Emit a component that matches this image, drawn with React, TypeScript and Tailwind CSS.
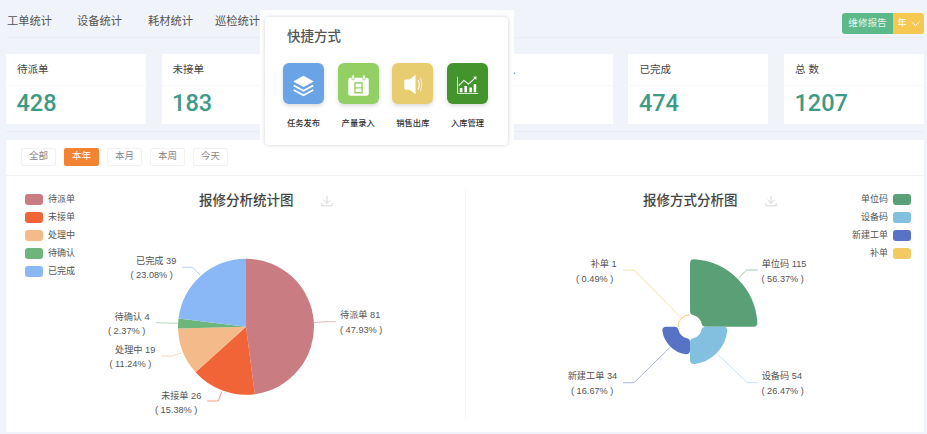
import React from "react";

const cards = [
  ["待派单", "428"],
  ["未接单", "183"],
  ["处理中", "110"],
  ["待确认", "12"],
  ["已完成", "474"],
  ["总 数", "1207"],
];

const tabs = ["全部", "本年", "本月", "本周", "今天"];

const pieData: [number, string][] = [
  [47.93, "#c97c82"],
  [15.38, "#f06438"],
  [11.24, "#f5ba8a"],
  [2.37, "#6eb57b"],
  [23.08, "#8ab8f6"],
];

function piePaths(cx: number, cy: number, r: number) {
  let acc = 0;
  return pieData.map(([v, color]) => {
    const a0 = (acc / 100) * Math.PI * 2;
    acc += v;
    const a1 = (acc / 100) * Math.PI * 2;
    const large = a1 - a0 > Math.PI ? 1 : 0;
    const d = `M${cx} ${cy}L${cx + r * Math.sin(a0)} ${cy - r * Math.cos(a0)}A${r} ${r} 0 ${large} 1 ${cx + r * Math.sin(a1)} ${cy - r * Math.cos(a1)}Z`;
    return <path key={color} d={d} fill={color} />;
  });
}

const AXES: [number, number][] = [
  [0, -1],
  [1, 0],
  [0, 1],
  [-1, 0],
];

function roseSector(cx: number, cy: number, q: number, ri: number, ro: number, c: number) {
  const a = AXES[q];
  const b = AXES[(q + 1) % 4];
  const pt = (R: number, nearB: boolean) => {
    const far = Math.sqrt(R * R - c * c);
    const u = nearB ? c : far;
    const v = nearB ? far : c;
    return `${cx + a[0] * u + b[0] * v} ${cy + a[1] * u + b[1] * v}`;
  };
  const Ro = ro - c;
  const Ri = ri + c;
  return `M${pt(Ro, false)}A${Ro} ${Ro} 0 0 1 ${pt(Ro, true)}L${pt(Ri, true)}A${Ri} ${Ri} 0 0 0 ${pt(Ri, false)}Z`;
}

function Sector({ q, ri, ro, color }: { q: number; ri: number; ro: number; color: string }) {
  return (
    <path
      d={roseSector(690, 326.7, q, ri, ro, 4)}
      fill={color}
      stroke={color}
      strokeWidth={8}
      strokeLinejoin="round"
    />
  );
}

function Label({ x, y, children }: { x: number; y: number; children: React.ReactNode }) {
  return (
    <text x={x} y={y} className="fill-[#555] text-[9.2px]">
      {children}
    </text>
  );
}

function DownloadIcon() {
  return (
    <svg width="12" height="12" viewBox="0 0 14 14" fill="none" stroke="#cfcfcf" strokeWidth="1">
      <path d="M7 1V9.5M2.8 5.6L7 9.8L11.2 5.6M1 9.5V12.6H13V9.5" />
    </svg>
  );
}

function Swatch({ color }: { color: string }) {
  return <span className="h-[11px] w-[18px] rounded-[3px]" style={{ backgroundColor: color }} />;
}

const shortcuts = [
  {
    label: "任务发布",
    bg: "bg-[#6ba4e6]",
    icon: (
      <svg width="41" height="41" viewBox="0 0 40 40">
        <path d="M20 12.5L30 18L20 23.5L10 18Z" fill="#fff" />
        <path d="M10.5 22L20 27.2L29.5 22M10.5 26.3L20 31.4L29.5 26.3" fill="none" stroke="#fff" strokeWidth="1.7" />
      </svg>
    ),
  },
  {
    label: "产量录入",
    bg: "bg-[#92d063]",
    icon: (
      <svg width="41" height="41" viewBox="0 0 40 40">
        <rect x="10" y="14.5" width="20" height="17.5" rx="2" fill="#fff" />
        <rect x="13.5" y="11.5" width="2.4" height="5" rx="1.2" fill="#fff" stroke="#92d063" strokeWidth="0.8" />
        <rect x="24.1" y="11.5" width="2.4" height="5" rx="1.2" fill="#fff" stroke="#92d063" strokeWidth="0.8" />
        <path d="M16.5 19.5H23.5V29H16.5ZM16.5 24.2H23.5" fill="none" stroke="#92d063" strokeWidth="1.3" />
      </svg>
    ),
  },
  {
    label: "销售出库",
    bg: "bg-[#e8cc70]",
    icon: (
      <svg width="41" height="41" viewBox="0 0 40 40">
        <path d="M12 17.5Q12 16 13.5 16H17L23 11.5V30.5L17 26H13.5Q12 26 12 24.5Z" fill="#fff" />
        <path d="M25.5 16.5Q27.5 21 25.5 25.5" fill="none" stroke="#fff" strokeWidth="1.2" />
        <path d="M27.8 14.5Q30.6 21 27.8 27.5" fill="none" stroke="#fff" strokeWidth="0.7" />
      </svg>
    ),
  },
  {
    label: "入库管理",
    bg: "bg-[#43942c]",
    icon: (
      <svg width="41" height="41" viewBox="0 0 40 40">
        <path d="M10.3 13.5V29.7H30.5" fill="none" stroke="#fff" strokeWidth="0.8" />
        <path d="M12.5 24.5H15V28.5H12.5ZM17 22.5H19.5V28.5H17ZM21.8 24H24.3V28.5H21.8ZM26 20.5H28.5V28.5H26Z" fill="#fff" />
        <path d="M11.5 22L16.5 17L21 20.5L28 14" fill="none" stroke="#fff" strokeWidth="1" />
        <path d="M25.5 13.5L28.8 13.2L28.5 16.5Z" fill="#fff" />
      </svg>
    ),
  },
];

export default function App() {
  return (
    <div className="relative flex h-[434px] w-[927px] flex-col overflow-hidden bg-[#f0f3f9] [font-family:'Liberation_Sans','Noto_Sans_CJK_SC',sans-serif]">
      {/* top navigation */}
      <div className="ml-[6px] mr-[3px] flex h-[38px] items-start justify-between border-b border-[#e9edf3] pl-px pt-[13px]">
        <div className="flex gap-[25px] text-[11.25px] leading-4 text-[#555]">
          <span>工单统计</span>
          <span>设备统计</span>
          <span className="ml-px">耗材统计</span>
          <span className="-ml-[3px]">巡检统计</span>
        </div>
        <div className="flex h-[21px] overflow-hidden rounded-[3px] text-white">
          <span className="flex w-[51px] items-center justify-center bg-[#5bb98a] text-[9.6px] text-[#e4f5ea]">维修报告</span>
          <span className="flex w-[31px] items-center justify-center gap-[4px] bg-[#f5c851] text-[9px]">
            年
            <svg width="9" height="6" viewBox="0 0 9 6" fill="none" stroke="#fff" strokeWidth="1">
              <path d="M0.7 1L4.5 4.6L8.3 1" />
            </svg>
          </span>
        </div>
      </div>

      {/* stat cards */}
      <div className="ml-[6px] mr-[3px] mt-4 grid grid-cols-6 gap-[15.6px]">
        {cards.map(([label, value]) => (
          <div key={label} className="flex h-[70px] flex-col bg-white">
            <div className="flex h-[32px] items-center border-b border-[#f7f8fa] pl-[11px] text-[10.5px] text-[#444]">{label}</div>
            <div className="flex flex-1 items-center pb-[3px] pl-[10.5px] text-[23.5px] font-medium text-[#3d9a85] [font-family:Roboto,sans-serif]">{value}</div>
          </div>
        ))}
      </div>

      <div className="ml-[6px] mr-[3px] mt-[7px] h-px bg-[#e9edf3]" />

      {/* analysis panel */}
      <div className="ml-[6px] mr-[3px] mt-2 flex h-[292px] flex-col bg-white">
        <div className="flex h-[36px] items-center gap-2 border-b border-[#f1f3f6] pb-[2px] pl-[15px]">
          {tabs.map((t) => (
            <span
              key={t}
              className={
                t === "本年"
                  ? "flex h-[18px] w-[35px] items-center justify-center rounded-[2px] bg-[#f28333] text-[9.5px] text-white"
                  : "flex h-[18px] w-[35px] items-center justify-center rounded-[2px] border border-[#f2f2f2] text-[9.5px] text-[#888]"
              }
            >
              {t}
            </span>
          ))}
        </div>

        <div className="flex flex-1">
          {/* left chart */}
          <div className="flex w-[459px]">
            <div className="flex w-[79px] flex-col gap-[7px] pl-[19px] pt-[18px]">
              {[
                ["待派单", "#c97c82"],
                ["未接单", "#f06438"],
                ["处理中", "#f5ba8a"],
                ["待确认", "#6eb57b"],
                ["已完成", "#8ab8f6"],
              ].map(([l, c]) => (
                <div key={l} className="flex h-[11px] items-center gap-[5px] text-[9px] text-[#555]">
                  <Swatch color={c} />
                  <span>{l}</span>
                </div>
              ))}
            </div>
            <div className="flex w-[380px] flex-col">
              <div className="ml-[114px] mt-[15px] flex h-5 items-center gap-[27px] text-[13.5px] font-medium text-[#444]">
                <span>报修分析统计图</span>
                <DownloadIcon />
              </div>
              <svg width="380" height="221" viewBox="85 211 380 221">
                {piePaths(246, 326.7, 68)}
                <g fill="none" strokeWidth="0.8">
                  <path d="M200 275L192.7 267.3H182.3" stroke="#a9cbf8" />
                  <path d="M178.3 323.3L155.7 322.7" stroke="#a5d0ae" />
                  <path d="M181.7 352.7L171.7 356H161" stroke="#f7cda9" />
                  <path d="M221.7 391.7L218.3 401H207.3" stroke="#f2815c" />
                  <path d="M314 322.7L325 321.7H336" stroke="#dba7ab" />
                </g>
                <Label x={136} y={264}>已完成 39</Label>
                <Label x={130.5} y={278.3}>( 23.08% )</Label>
                <Label x={114.5} y={319.5}>待确认 4</Label>
                <Label x={108} y={334}>( 2.37% )</Label>
                <Label x={115} y={353}>处理中 19</Label>
                <Label x={109.5} y={367}>( 11.24% )</Label>
                <Label x={161} y={398.5}>未接单 26</Label>
                <Label x={155} y={412.8}>( 15.38% )</Label>
                <Label x={340} y={318}>待派单 81</Label>
                <Label x={340} y={332.5}>( 47.93% )</Label>
              </svg>
            </div>
          </div>

          <div className="my-[14px] w-px bg-[#f3f4f6]" />

          {/* right chart */}
          <div className="flex flex-1">
            <div className="flex w-[372px] flex-col">
              <div className="ml-[177px] mt-[15px] flex h-5 items-center gap-[27px] text-[13.5px] font-medium text-[#444]">
                <span>报修方式分析图</span>
                <DownloadIcon />
              </div>
              <svg width="372" height="221" viewBox="466 211 372 221">
                <Sector q={0} ri={12} ro={67.5} color="#5aa077" />
                <Sector q={1} ri={12} ro={37.5} color="#83bfdf" />
                <Sector q={2} ri={12} ro={28} color="#5873c5" />
                <path d="M678 326.7A12 12 0 0 1 690 314.7" fill="none" stroke="#f2c963" strokeWidth="0.9" />
                <g fill="none" strokeWidth="0.8">
                  <path d="M738.3 278.3L746.7 270H757.7" stroke="#85b99b" />
                  <path d="M716.7 353.3L747.3 382.7H757.7" stroke="#b4daee" />
                  <path d="M670 347.3L634 382.7H623.3" stroke="#95a6db" />
                  <path d="M681.7 318.3L634 270H623.3" stroke="#f5dc93" />
                </g>
                <Label x={761.7} y={267.3}>单位码 115</Label>
                <Label x={761.5} y={281.6}>( 56.37% )</Label>
                <Label x={761.7} y={379.3}>设备码 54</Label>
                <Label x={761.5} y={393.6}>( 26.47% )</Label>
                <Label x={567.7} y={379.3}>新建工单 34</Label>
                <Label x={571} y={393.6}>( 16.67% )</Label>
                <Label x={590.7} y={267.3}>补单 1</Label>
                <Label x={576} y={281.6}>( 0.49% )</Label>
              </svg>
            </div>
            <div className="flex flex-1 flex-col items-end gap-[7px] pr-[13px] pt-[18px]">
              {[
                ["单位码", "#5aa077"],
                ["设备码", "#83bfdf"],
                ["新建工单", "#5873c5"],
                ["补单", "#f2c963"],
              ].map(([l, c]) => (
                <div key={l} className="flex h-[11px] items-center gap-[5px] text-[9px] text-[#555]">
                  <span>{l}</span>
                  <Swatch color={c} />
                </div>
              ))}
            </div>
          </div>
        </div>
      </div>

      {/* shortcut popover */}
      <div className="absolute left-[260px] top-[10px] h-[130px] w-[254px] bg-white pl-[5px] pt-[7px]">
        <div className="h-[128px] w-[243px] rounded-[4px] bg-white pl-[18px] pt-[10px] shadow-[0_0_4px_rgba(0,0,0,0.18)]">
          <div className="pl-[4px] text-[13.5px] font-medium leading-5 text-[#555]">快捷方式</div>
          <div className="mt-4 flex gap-[13.7px]">
            {shortcuts.map((s) => (
              <div key={s.label} className="flex w-[41px] flex-col items-center">
                <div className={`h-[41px] w-[41px] rounded-[6px] shadow-[0_2px_4px_rgba(0,0,0,0.15)] ${s.bg}`}>{s.icon}</div>
                <div className="mt-[13px] whitespace-nowrap text-[8.3px] font-medium leading-3 text-[#333]">{s.label}</div>
              </div>
            ))}
          </div>
        </div>
      </div>
    </div>
  );
}
